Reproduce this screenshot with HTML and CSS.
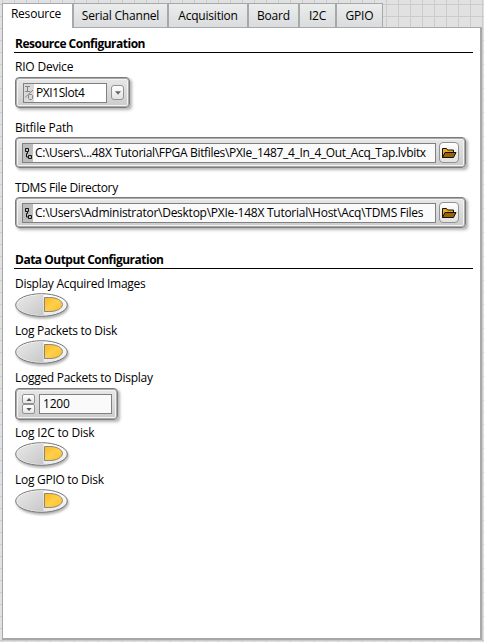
FILE: index.html
```
<!DOCTYPE html>
<html lang="en">
<head>
<meta charset="utf-8">
<title>Resource Configuration</title>
<link rel="stylesheet" href="styles.css">
</head>
<body>
<svg class="defs" width="0" height="0" aria-hidden="true">
  <defs>
    <linearGradient id="metal" x1="0" y1="0" x2="1" y2="1"><stop offset="0" stop-color="#e9e9e9"/><stop offset="1" stop-color="#c8c8c8"/></linearGradient>
    <linearGradient id="rim" x1="0" y1="0" x2="0" y2="1"><stop offset="0" stop-color="#ffffff"/><stop offset="1" stop-color="#e8e8e8"/></linearGradient>
    <linearGradient id="amber" x1="0" y1="0" x2="1" y2="1"><stop offset="0" stop-color="#ffb81c"/><stop offset=".5" stop-color="#ffd04a"/><stop offset="1" stop-color="#ffbd20"/></linearGradient>
    <symbol id="toggle" viewBox="0 0 56 28">
      <ellipse cx="26.500" cy="12" rx="25.800" ry="11.300" fill="url(#rim)" stroke="#757575"/>
      <path d="M28.500 2H26C12 2 2 6.500 2 12S12 22 26 22h2.500z" fill="url(#metal)"/>
      <path d="M29.500 4.500h5C42 4.500 47 7.500 47.500 11.500C47 15.500 42 18.500 34.500 18.500h-5z" fill="url(#amber)" stroke="#858585"/>
    </symbol>
    <symbol id="path" viewBox="0 0 10 18">
      <path d="M2.500 4.500h3v3h-3zM5.500 11.500h3v3h-3zM4.500 7.500v2M4.500 9.500H3.500v3.500h2" fill="none" stroke="#111"/>
    </symbol>
    <symbol id="folder" viewBox="0 0 16 12">
      <path d="M1.500 10.500v-9h4l1 1.500h6v2" fill="#e8a820" stroke="#111"/>
      <path d="M1.500 10.500L4 5.500h11L12.500 10.500z" fill="#996400" stroke="#111"/>
    </symbol>
  </defs>
</svg>
<div class="window">
  <nav class="tabs">
    <div class="tab tab-resource active"><span>Resource</span></div>
    <div class="tab tab-serial"><span>Serial Channel</span></div>
    <div class="tab tab-acquisition"><span>Acquisition</span></div>
    <div class="tab tab-board"><span>Board</span></div>
    <div class="tab tab-i2c"><span>I2C</span></div>
    <div class="tab tab-gpio"><span>GPIO</span></div>
  </nav>
  <main class="page">
    <h2 class="heading">Resource Configuration</h2>
    <section class="field field-device">
      <label>RIO Device</label>
      <div class="control device">
        <div class="entry"><svg class="io" viewBox="0 0 10 18"><path d="M1 2.500h5M3.500 2.500v5M1 7.500h5M1 13.500L9 6M5.500 10.500h2l1 1v3l-1 1h-2l-1-1v-3z" fill="none" stroke="#858585"/></svg><span class="value t-slot">PXI1Slot4</span></div>
        <div class="button drop"><svg viewBox="0 0 7 4" width="6" height="4"><path d="M0 0h7L3.500 4z" fill="#666"/></svg></div>
      </div>
    </section>
    <section class="field field-path">
      <label>Bitfile Path</label>
      <div class="control wide">
        <div class="entry"><svg class="pathicon"><use href="#path"/></svg><span class="value t-bit">C:\Users\...48X Tutorial\FPGA Bitfiles\PXIe_1487_4_In_4_Out_Acq_Tap.lvbitx</span></div>
        <div class="button browse"><svg width="16" height="12"><use href="#folder"/></svg></div>
      </div>
    </section>
    <section class="field field-path">
      <label class="t-dir">TDMS File Directory</label>
      <div class="control wide">
        <div class="entry"><svg class="pathicon"><use href="#path"/></svg><span class="value t-tdms">C:\Users\Administrator\Desktop\PXIe-148X Tutorial\Host\Acq\TDMS Files</span></div>
        <div class="button browse"><svg width="16" height="12"><use href="#folder"/></svg></div>
      </div>
    </section>
    <h2 class="heading output">Data Output Configuration</h2>
    <section class="switch first"><label class="t-long">Display Acquired Images</label><svg class="toggle"><use href="#toggle"/></svg></section>
    <section class="switch"><label class="t-long">Log Packets to Disk</label><svg class="toggle"><use href="#toggle"/></svg></section>
    <section class="field field-count">
      <label class="t-long">Logged Packets to Display</label>
      <div class="control numeric">
        <div class="spin"><i><svg viewBox="0 0 7 4"><path d="M0 4h7L3.500 0z" fill="#555"/></svg></i><i><svg viewBox="0 0 7 4"><path d="M0 0h7L3.500 4z" fill="#555"/></svg></i></div>
        <div class="entry"><span class="value">1200</span></div>
      </div>
    </section>
    <section class="switch"><label>Log I2C to Disk</label><svg class="toggle"><use href="#toggle"/></svg></section>
    <section class="switch"><label class="t-long">Log GPIO to Disk</label><svg class="toggle"><use href="#toggle"/></svg></section>
  </main>
</div>
</body>
</html>
```
FILE: styles.css
```
* { box-sizing: border-box; }
body {
  margin: 0;
  width: 484px;
  height: 642px;
  overflow: hidden;
  background-color: #e1e1e1;
  background-image: linear-gradient(to right, #cbcbcb 1px, transparent 1px), linear-gradient(#cbcbcb 1px, transparent 1px);
  background-size: 12px 12px;
  background-position: 2px 4px;
  font: 12px/16px "Open Sans", "Noto Sans", sans-serif;
  letter-spacing: -0.2px;
  color: #000;
}
.defs { position: absolute; }
.window { padding: 3px 2px 2px; height: 642px; display: flex; flex-direction: column; }
.tabs { display: flex; height: 24px; }
.tab {
  height: 25px;
  border: 1px solid #a6a9ac;
  border-left: 0;
  border-right-width: 2px;
  background: linear-gradient(#ebecec, #dadcdd);
  text-align: center;
  line-height: 24px;
  white-space: nowrap;
}
.tab.active { background: #fff; border-left: 1px solid #a6a9ac; border-bottom: 0; line-height: 20px; z-index: 1; padding-right: 3px; }
.tab-resource { width: 72px; }
.tab-serial { width: 95px; }
.tab-acquisition { width: 80px; }
.tab-board { width: 51px; }
.tab-i2c { width: 37px; }
.tab-gpio { width: 46px; border-right-width: 1px; }
.page {
  flex: 1;
  background: #fff;
  border: 1px solid #a6a9ac;
  border-right-width: 2px;
  border-bottom-width: 2px;
  padding: 8px 7px 0 12px;
}
.heading {
  margin: 0 0 0 -1px;
  height: 17px;
  border-bottom: 1px solid #000;
  padding-left: 1px;
  font-size: 12px;
  line-height: 16px;
  font-weight: 700;
  letter-spacing: -0.5px;
}
.field label, .switch label { display: block; height: 16px; width: max-content; white-space: nowrap; }
.field-device { margin-top: 6px; }
.field-path { margin-top: 12px; }
.heading.output { margin-top: 24px; }
.control {
  display: flex;
  align-items: center;
  margin-top: 2px;
  height: 31px;
  border: 1px solid #7c7c7c;
  border-radius: 4px;
  background: linear-gradient(#e8e8e8, #cbcbcb);
  box-shadow: inset 0 0 0 1px #aaa, inset 0 0 0 2px #f3f3f3, 2px 2px 3px rgba(0, 0, 0, .3);
  padding-left: 7px;
}
.field-path .control { margin-top: 1px; }
.device { width: 115px; }
.wide { width: 451px; padding-left: 6px; }
.numeric { width: 103px; height: 32px; padding-left: 6px; }
.entry {
  display: flex;
  align-items: center;
  height: 20px;
  border: 1px solid #808080;
  background: #fafafa;
  overflow: hidden;
}
.device .entry { width: 84px; background: #fff; }
.wide .entry { width: 414px; }
.numeric .entry { width: 73px; height: 20px; margin-left: 4px; padding-left: 3px; }
.value { white-space: nowrap; }
.io { width: 10px; height: 18px; background: #dadada; margin-right: 2px; flex: none; }
.pathicon { width: 10px; height: 18px; background: #bdbdbd; margin-right: 2px; flex: none; }
.t-slot { letter-spacing: -0.42px; }
.t-bit { letter-spacing: -0.33px; }
.t-tdms { letter-spacing: -0.26px; }
.t-dir { letter-spacing: -0.35px; }
.t-long { letter-spacing: -0.28px; }
.button {
  display: flex;
  align-items: center;
  justify-content: center;
  border: 1px solid #929292;
  border-radius: 3px;
  background: linear-gradient(#fff, #e2e2e2);
}
.drop { width: 13px; height: 15px; margin-left: 4px; }
.browse { width: 20px; height: 21px; margin-left: 3px; border-radius: 4px; }
.spin { display: flex; flex-direction: column; width: 13px; height: 20px; }
.spin i {
  display: flex;
  align-items: center;
  justify-content: center;
  height: 10px;
  border: 1px solid #929292;
  border-radius: 2px;
  background: linear-gradient(#fff, #e5e5e5);
}
.spin svg { width: 6px; height: 3px; }
.switch { height: 47px; }
.switch.first { margin-top: 7px; }
.toggle { display: block; width: 56px; height: 28px; margin-top: 1px; filter: drop-shadow(1px 2px 1px rgba(0, 0, 0, .3)); }
.field-count { height: 55px; }
```
